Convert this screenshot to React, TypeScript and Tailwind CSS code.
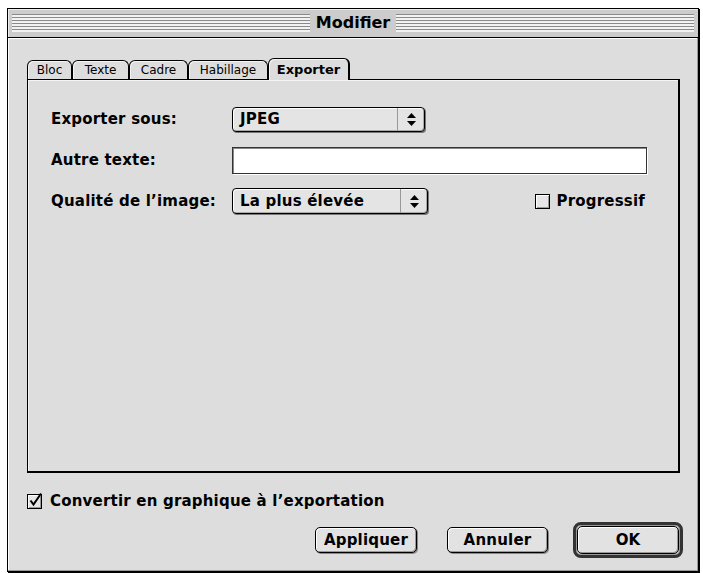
import React from 'react';

const font = "font-['DejaVu_Sans',sans-serif]";

function Arrows() {
  return (
    <svg width="9" height="13" viewBox="0 0 9 13" className="block">
      <path d="M4.5 0 L9 5 L0 5 Z" fill="#000" />
      <path d="M0 8 L9 8 L4.5 13 Z" fill="#000" />
    </svg>
  );
}

function Popup({ label, width }: { label: string; width: string }) {
  return (
    <div
      className={`${width} h-full flex rounded-[4px] border border-black bg-[#e4e4e4] shadow-[inset_1px_1px_0_#fff,inset_-1px_-1px_0_#aaa,1px_1px_0_#777]`}
    >
      <div className="flex-1 flex items-center pl-[7px] text-[15px] font-bold tracking-[0.2px]">{label}</div>
      <div className="w-[27px] flex items-center justify-center border-l border-[#999]">
        <Arrows />
      </div>
    </div>
  );
}

function Checkbox({ checked }: { checked?: boolean }) {
  return (
    <div className="relative w-[15px] h-[15px] border border-black bg-[#e6e6e6] shadow-[inset_1px_1px_0_#fff,inset_-1px_-1px_0_#999] shrink-0">
      {checked && (
        <svg width="15" height="16" viewBox="0 0 15 16" className="absolute -top-[3px] left-0 block">
          <path d="M2.5 8.5 L5.5 12.5 L13 1.5" fill="none" stroke="#000" strokeWidth="2" />
        </svg>
      )}
    </div>
  );
}

function Button({ children, width }: { children: React.ReactNode; width: string }) {
  return (
    <div
      className={`${width} h-[26px] flex items-center justify-center rounded-[5px] border border-black bg-[#e2e2e2] shadow-[inset_1px_1px_0_#fff,inset_-1px_-1px_0_#999,1px_1px_0_#888] text-[15px] font-bold tracking-[0.2px]`}
    >
      {children}
    </div>
  );
}

function TitleLines() {
  return (
    <div className="flex-1 h-[18px] bg-[image:repeating-linear-gradient(to_bottom,#8a8a8a_0px,#8a8a8a_1px,#f2f2f2_1px,#f2f2f2_3px)] border-b border-[#f2f2f2]" />
  );
}

export default function App() {
  const tabs = [
    { name: 'Bloc', w: 'w-[45px]' },
    { name: 'Texte', w: 'w-[57px]' },
    { name: 'Cadre', w: 'w-[59px]' },
    { name: 'Habillage', w: 'w-[80px]' },
  ];
  return (
    <div className={`w-[703px] h-[573px] bg-white pt-[8px] pl-[7px] text-black ${font}`}>
      <div className="w-[692px] h-[564px] border border-black bg-[#dddddd] flex flex-col shadow-[1px_1px_0_#000]">
        {/* title bar */}
        <div className="h-[29px] shrink-0 bg-[#cccccc] border-b border-black flex items-center px-[4px] gap-[6px] shadow-[inset_1px_1px_0_#eee]">
          <TitleLines />
          <div className="text-[16px] font-bold leading-none">Modifier</div>
          <TitleLines />
        </div>

        {/* content */}
        <div className="flex-1 flex flex-col pl-[19px] pr-[17px] pt-[20px] border-r border-b border-[#999] shadow-[inset_1px_1px_0_#fff]">
          {/* tabs */}
          <div className="flex items-end h-[22px] relative z-10 -mb-px">
            {tabs.map((t) => (
              <div
                key={t.name}
                className={`${t.w} h-[19px] mb-px border border-b-0 border-black rounded-t-[6px] flex items-center justify-center text-[12px] bg-[#dddddd] shadow-[inset_1px_1px_0_#f4f4f4]`}
              >
                {t.name}
              </div>
            ))}
            <div className="w-[82px] h-[22px] border-t border-l border-r-2 border-black rounded-t-[6px] flex items-center justify-center text-[13px] font-bold bg-[#dddddd] shadow-[inset_1px_1px_0_#f4f4f4]">
              Exporter
            </div>
          </div>

          {/* panel */}
          <div className="h-[394px] border-t border-l border-black border-r-2 border-b-2 flex flex-col pl-[23px] pr-[31px] pt-[27px] shadow-[inset_1px_1px_0_#f4f4f4] text-[15px] font-bold tracking-[0.2px]">
            <div className="flex items-center h-[25px]">
              <div className="w-[181px]">Exporter sous:</div>
              <Popup label="JPEG" width="w-[193px]" />
            </div>
            <div className="flex items-center h-[27px] mt-[15px]">
              <div className="w-[181px]">Autre texte:</div>
              <div className="flex-1 h-full bg-white border border-[#333] shadow-[inset_1px_1px_0_#888,1px_1px_0_#fff]" />
            </div>
            <div className="flex items-center h-[26px] mt-[14px]">
              <div className="w-[181px]">Qualité de l’image:</div>
              <Popup label="La plus élevée" width="w-[196px]" />
              <div className="flex-1" />
              <div className="flex items-center gap-[6px] mr-[2px]">
                <Checkbox />
                <span>Progressif</span>
              </div>
            </div>
          </div>

          {/* bottom checkbox */}
          <div className="flex items-center gap-[8px] mt-[19px] h-[18px] text-[15px] font-bold tracking-[0.2px]">
            <Checkbox checked />
            <span>Convertir en graphique à l’exportation</span>
          </div>

          {/* buttons */}
          <div className="flex items-center justify-end mt-[12px] -mr-[3px] gap-[30px]">
            <Button width="w-[102px]">Appliquer</Button>
            <Button width="w-[101px]">Annuler</Button>
            <div className="-ml-[5px] w-[110px] h-[36px] rounded-[8px] border-[3px] border-[#333] shadow-[inset_0_0_0_1px_#999] p-[1px] flex">
              <div className="flex-1 flex items-center justify-center rounded-[5px] border border-black bg-[#e2e2e2] shadow-[inset_1px_1px_0_#fff,inset_-1px_-1px_0_#999] text-[15px] font-bold">
                OK
              </div>
            </div>
          </div>
        </div>
      </div>
    </div>
  );
}
